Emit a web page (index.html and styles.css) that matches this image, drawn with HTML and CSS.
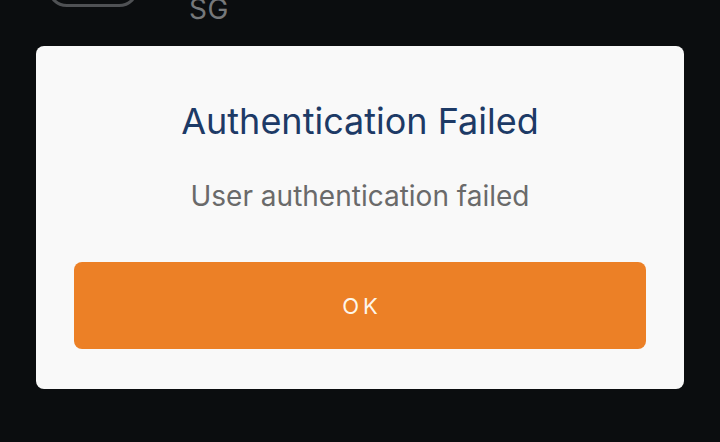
FILE: index.html
```html
<!DOCTYPE html>
<html lang="en">
<head>
<meta charset="utf-8">
<title>Authentication Failed</title>
<link rel="stylesheet" href="styles.css">
</head>
<body>
<div class="backdrop">
  <div class="topbar">
    <div class="pill"></div>
    <div class="code">SG</div>
  </div>
  <div class="dialog">
    <h1 class="title">Authentication Failed</h1>
    <p class="message">User authentication failed</p>
    <button class="ok">OK</button>
  </div>
</div>
</body>
</html>
```
FILE: styles.css
```css
html, body {
  margin: 0;
  padding: 0;
  background: #0b0d0f;
  height: 100%;
  overflow: hidden;
}
.backdrop {
  font-family: Inter, "Noto Sans", sans-serif;
  display: flex;
  flex-direction: column;
}
.topbar {
  display: flex;
  align-items: flex-end;
  height: 60px;
  margin-top: -20px;
  padding-left: 47px;
  gap: 50px;
}
.pill {
  width: 92px;
  height: 50px;
  border: 3px solid #4f5154;
  border-radius: 20px;
  box-sizing: border-box;
  margin-bottom: 33px;
}
.code {
  color: #76787a;
  font-size: 28px;
  line-height: 1;
  margin-bottom: 17px;
  letter-spacing: 0.5px;
}
.dialog {
  margin: 6px 36px 0;
  height: 343px;
  background: #f9f9f9;
  border-radius: 8px;
  box-sizing: border-box;
  padding: 0 38px 40px;
  display: flex;
  flex-direction: column;
  align-items: stretch;
}
.title {
  margin: 53px 0 0;
  text-align: center;
  font-weight: 400;
  font-size: 36px;
  line-height: 44px;
  color: #1d3a66;
}
.message {
  margin: 36px 0 0;
  text-align: center;
  font-size: 28px;
  line-height: 34px;
  color: #6a6a6a;
}
.ok {
  margin-top: auto;
  height: 87px;
  border: none;
  border-radius: 8px;
  background: #ec8026;
  color: #fdf6ea;
  font-family: Inter, "Noto Sans", sans-serif;
  font-size: 22px;
  letter-spacing: 4px;
  padding: 0 0 0 4px;
}
```
